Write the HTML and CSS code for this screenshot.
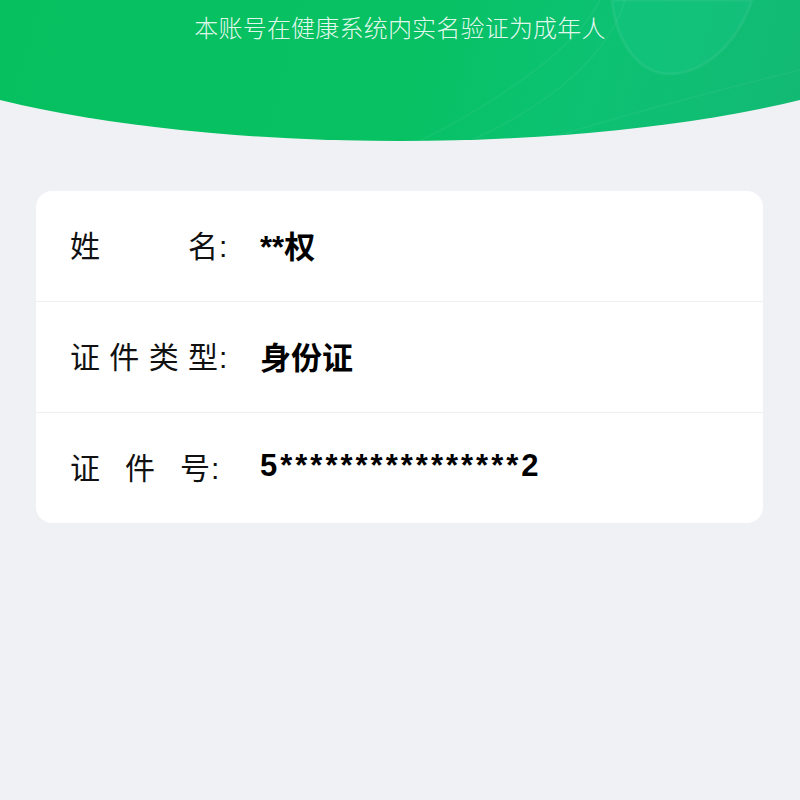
FILE: index.html
```html
<!DOCTYPE html>
<html lang="zh-CN">
<head>
    <meta charset="UTF-8">
    <meta name="viewport" content="width=device-width, initial-scale=1.0">
    <title>实名信息</title>
    <link rel="stylesheet" href="styles.css">
</head>
<body>

    <!-- Green header -->
    <div class="header">
        <svg class="header-deco" width="800" height="141" viewBox="0 0 800 141">
            <path class="shield" d="M612 0 C 616 40, 636 72, 668 74 C 706 74, 738 42, 752 0 Z" />
            <path class="line" d="M420 141 C 520 90, 580 40, 600 0" />
            <path class="line" d="M470 141 C 560 100, 610 50, 625 0" />
            <path class="line" d="M540 141 C 640 110, 720 90, 800 70" />
        </svg>
        <p class="header-title">本账号在健康系统内实名验证为成年人</p>
    </div>

    <!-- Info card -->
    <div class="card">
        <div class="row">
            <div class="label"><span class="label-text">姓名</span><span class="colon">:</span></div>
            <div class="value">**权</div>
        </div>
        <div class="row">
            <div class="label"><span class="label-text">证件类型</span><span class="colon">:</span></div>
            <div class="value">身份证</div>
        </div>
        <div class="row">
            <div class="label"><span class="label-text short">证件号</span><span class="colon">:</span></div>
            <div class="value id-number">5****************2</div>
        </div>
    </div>

</body>
</html>
```

FILE: styles.css
```css
body {
    margin: 0;
    padding: 0;
    background-color: #f0f1f5;
    font-family: "Liberation Sans", "Noto Sans CJK SC", sans-serif;
    color: #111;
}
.header {
    position: relative;
    height: 141px;
    overflow: hidden;
    background: linear-gradient(105deg, #06c060 0%, #07c162 50%, #0cc272 72%, #13b974 100%);
    clip-path: ellipse(567px 141px at 50% 0);
}
.header-deco {
    position: absolute;
    top: 0;
    left: 0;
}
.header-deco .shield {
    fill: rgba(30, 205, 150, 0.22);
    stroke: rgba(255, 255, 255, 0.06);
    stroke-width: 3;
}
.header-deco .line {
    fill: none;
    stroke: rgba(255, 255, 255, 0.04);
    stroke-width: 2;
}
.header-title {
    position: relative;
    margin: 0;
    padding-top: 12px;
    text-align: center;
    font-family: "Noto Sans CJK SC", sans-serif;
    font-size: 24px;
    font-weight: 300;
    line-height: 30px;
    letter-spacing: 0.2px;
    color: rgba(255, 255, 255, 0.9);
}
.card {
    margin: 50px 37px 0 36px;
    background: #fff;
    border-radius: 16px;
}
.row {
    display: flex;
    align-items: center;
    height: 110px;
    padding-left: 34px;
    border-top: 1px solid #eeeff1;
}
.row:first-child {
    border-top: none;
}
.label {
    display: flex;
    align-items: baseline;
    width: 190px;
    margin-top: -5px;
    font-family: "Noto Sans CJK SC", sans-serif;
    font-size: 30px;
    color: #111;
}
.label-text {
    width: 148px;
    text-align: justify;
    text-align-last: justify;
}
.label-text.short {
    width: 140px;
}
.colon {
    font-family: "Liberation Sans", sans-serif;
    margin-left: 1px;
}
.value {
    font-size: 31px;
    font-weight: bold;
    color: #000;
    margin-top: -4px;
}
.id-number {
    letter-spacing: 3px;
}
```
